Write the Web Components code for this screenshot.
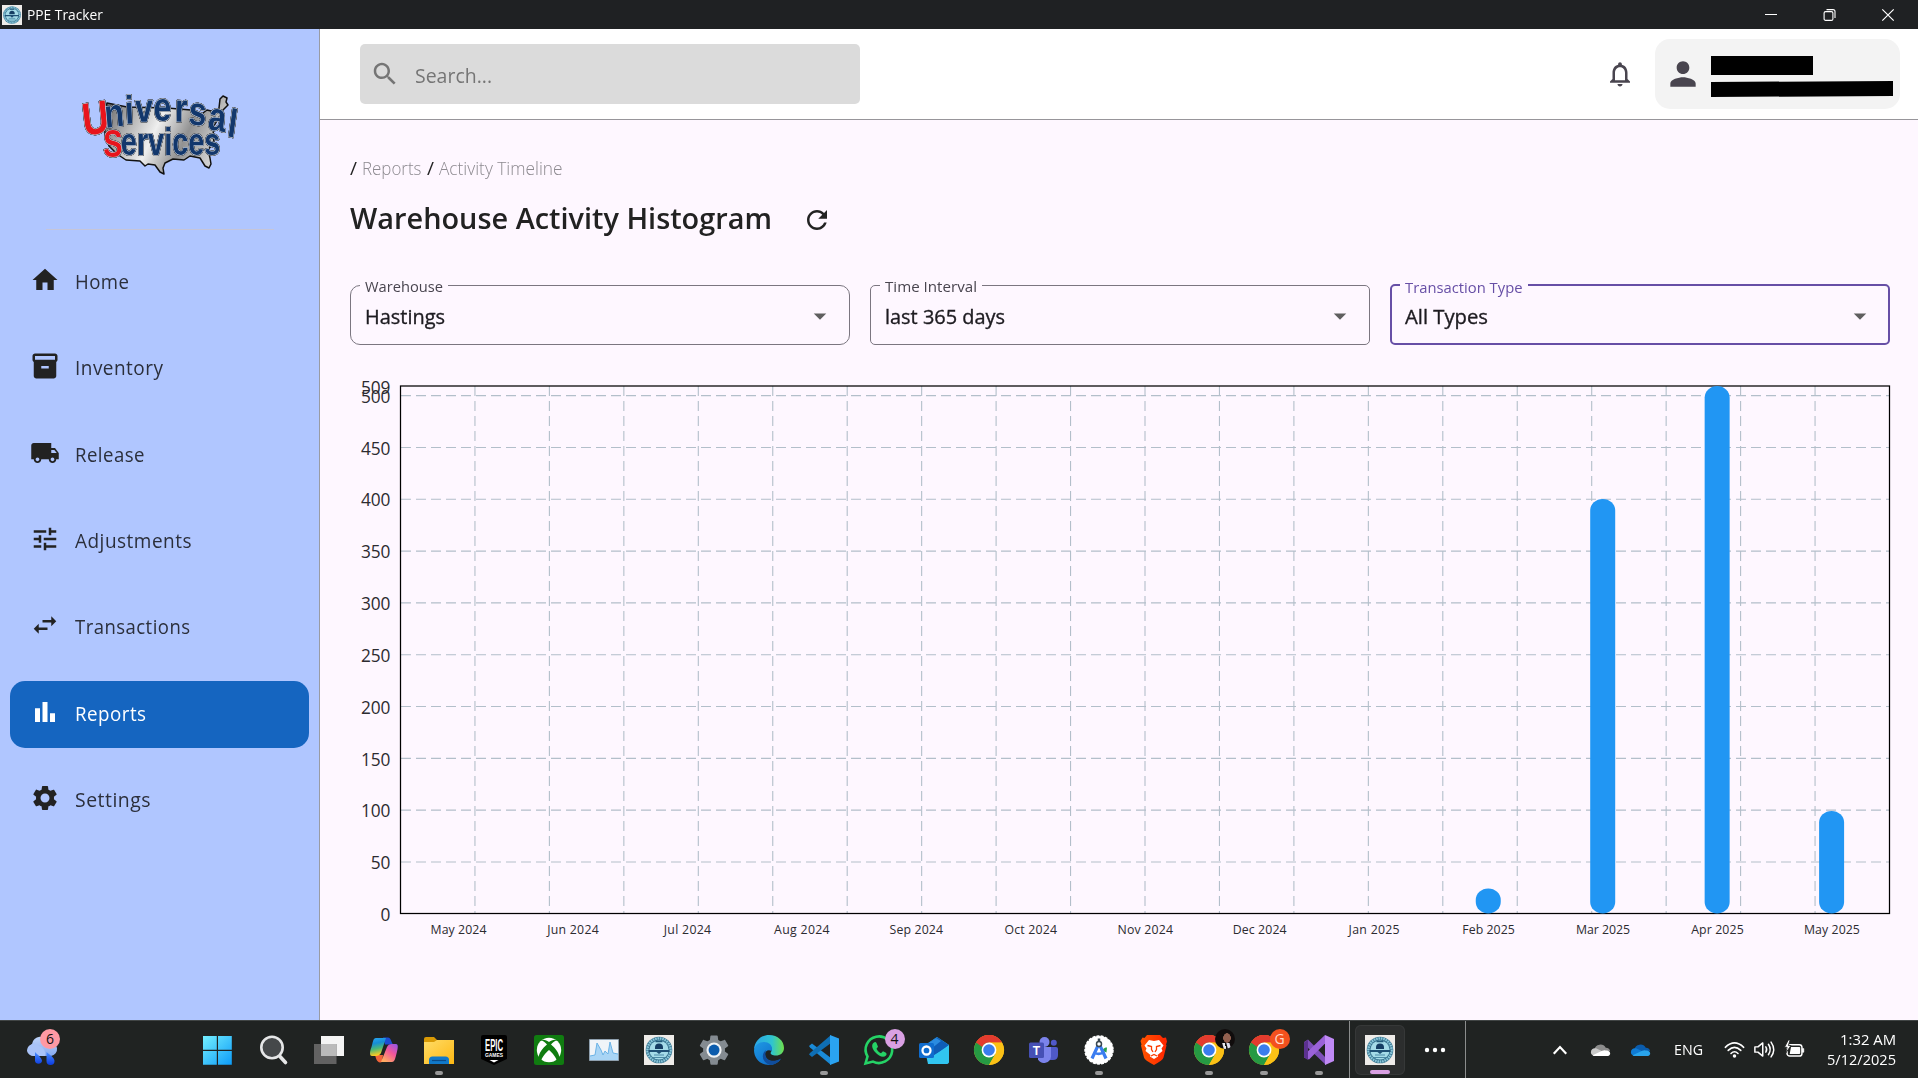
<!DOCTYPE html>
<html lang="en">
<head>
<meta charset="utf-8">
<title>PPE Tracker</title>
<style>
html,body{margin:0;height:100%;overflow:hidden}
body{font-family:"Open Sans","Noto Sans",sans-serif;color:#1d1b20}
</style>
</head>
<body>
<ppe-desktop></ppe-desktop>
<script>
const define=(name,html,setup)=>{
  const t=document.createElement('template');t.innerHTML=html;
  customElements.define(name,class extends HTMLElement{
    connectedCallback(){
      if(this.shadowRoot)return;
      const r=this.attachShadow({mode:'open'});
      r.appendChild(t.content.cloneNode(true));
      if(setup)setup(this,r);
    }
  });
};

/* Text that is condensed or widened to the advance given in "w". */
define('fit-text',`<style>:host{display:block;white-space:nowrap;flex:none}span{display:inline-block;transform-origin:0 50%}</style><span><slot></slot></span>`,(el,r)=>{
  const s=r.querySelector('span'),w=+el.getAttribute('w');
  const n=s.getBoundingClientRect().width;
  el.style.width=w+'px';
  if(n)s.style.transform=`scaleX(${w/n})`;
});

const chrome=`<circle cx="15" cy="15" r="15" fill="#fbc116"/><path d="M15 15 2 7.5A15 15 0 0 1 28 7.5H15z" fill="#e33b2e"/><path d="M2 7.5A15 15 0 0 0 15 30L21.5 18.7 15 15z" fill="#269a43"/><path d="M2 7.5 8.5 18.7 15 15V7.5z" fill="#269a43"/><path d="M2 7.5A15 15 0 0 1 28 7.5H15A7.5 7.5 0 0 0 8.3 12z" fill="#e33b2e"/><path d="M28 7.5H15l6.5 11.2L15 30A15 15 0 0 0 28 7.5" fill="#fbc116"/><circle cx="15" cy="15" r="7.4" fill="#fff"/><circle cx="15" cy="15" r="5.8" fill="#3b7ded"/>`;
const seal=`<path fill="#eeece9" d="M0 0h30v30H0z"/><circle cx="15" cy="15" r="13.3" fill="#3a7591"/><circle cx="15" cy="15" r="11.6" fill="none" stroke="#8cc9dc" stroke-width="2.400" stroke-dasharray="1.6 .8"/><circle cx="15" cy="15" r="9.6" fill="#a5dbe8"/><path d="M11.500 6.500h7" stroke="#245c7c" stroke-width="1.500"/><path d="M11 12.500a4 4 0 0 1 8 0v1.500h-8z" fill="#153d63"/><path d="M4.500 15h21v2h-8l-2.500 2-2.500-2h-8z" fill="#1f4f74"/><path d="M10 20h10M9 22.500h12" stroke="#4d8aa6" stroke-width="1.200"/>`;
const gear='M19.14 12.94c.04-.3.06-.61.06-.94 0-.32-.02-.64-.07-.94l2.03-1.58c.18-.14.23-.41.12-.61l-1.92-3.32c-.12-.22-.37-.29-.59-.22l-2.39.96c-.5-.38-1.03-.7-1.62-.94l-.36-2.54c-.04-.24-.24-.41-.48-.41h-3.84c-.24 0-.43.17-.47.41l-.36 2.54c-.59.24-1.13.57-1.62.94l-2.39-.96c-.22-.08-.47 0-.59.22L2.74 8.87c-.12.21-.08.47.12.61l2.03 1.58c-.05.3-.09.63-.09.94s.02.64.07.94l-2.03 1.58c-.18.14-.23.41-.12.61l1.92 3.32c.12.22.37.29.59.22l2.39-.96c.5.38 1.03.7 1.62.94l.36 2.54c.05.24.24.41.48.41h3.84c.24 0 .44-.17.47-.41l.36-2.54c.59-.24 1.13-.56 1.62-.94l2.39.96c.22.08.47 0 .59-.22l1.92-3.32c.12-.22.07-.47-.12-.61l-2.01-1.58zM12 15.600c-1.980 0-3.600-1.620-3.600-3.600s1.620-3.600 3.600-3.600 3.600 1.620 3.600 3.600-1.620 3.600-3.600 3.600z';
const m=d=>[24,`<path fill="currentColor" d="${d}"/>`];
const ICONS={
home:m('M10 20v-6h4v6h5v-8h3L12 3 2 12h3v8z'),
inventory:m('M20 2H4c-1 0-2 .9-2 2v3.010c0 .72.43 1.340 1 1.690V20c0 1.100 1.100 2 2 2h14c.9 0 2-.9 2-2V8.700c.57-.35 1-.97 1-1.690V4c0-1.100-1-2-2-2zm-5 12H9v-2h6v2zm5-7H4V4h16v3z'),
truck:m('M20 8h-3V4H3c-1.100 0-2 .9-2 2v11h2c0 1.660 1.340 3 3 3s3-1.340 3-3h6c0 1.660 1.340 3 3 3s3-1.340 3-3h2v-5l-3-4zM6 18.500c-.83 0-1.500-.67-1.500-1.500s.67-1.500 1.500-1.500 1.500.67 1.500 1.500-.67 1.500-1.500 1.500zm13.500-9l1.960 2.500H17V9.500h2.500zm-1.500 9c-.83 0-1.500-.67-1.500-1.500s.67-1.500 1.500-1.500 1.500.67 1.500 1.500-.67 1.500-1.500 1.500z'),
tune:m('M3 17v2h6v-2H3zM3 5v2h10V5H3zm10 16v-2h8v-2h-8v-2h-2v6h2zM7 9v2H3v2h4v2h2V9H7zm14 4v-2H11v2h10zm-6-4h2V7h4V5h-4V3h-2v6z'),
swap:m('M6.990 11L3 15l3.990 4v-3H14v-2H6.990v-3zM21 9l-3.990-4v3H10v2h7.010v3L21 9z'),
bars:m('M4 9h4v11H4zM16 13h4v7h-4zM10 4h4v16h-4z'),
settings:m(gear),
search:m('M15.500 14h-.79l-.28-.27C15.410 12.590 16 11.110 16 9.500 16 5.910 13.090 3 9.500 3S3 5.910 3 9.500 5.910 16 9.500 16c1.610 0 3.090-.59 4.230-1.570l.27.28v.79l5 4.990L20.490 19l-4.990-5zm-6 0C7.010 14 5 11.990 5 9.500S7.010 5 9.500 5 14 7.010 14 9.500 11.990 14 9.500 14z'),
bell:m('M12 22c1.100 0 2-.9 2-2h-4c0 1.100.9 2 2 2zm6-6v-5c0-3.070-1.630-5.640-4.500-6.320V4c0-.83-.67-1.500-1.500-1.500s-1.500.67-1.500 1.500v.68C7.640 5.360 6 7.920 6 11v5l-2 2v1h16v-1l-2-2zm-2 1H8v-6c0-2.480 1.510-4.500 4-4.500s4 2.020 4 4.500v6z'),
person:m('M12 12c2.210 0 4-1.790 4-4s-1.790-4-4-4-4 1.790-4 4 1.790 4 4 4zm0 2c-2.670 0-8 1.340-8 4v2h16v-2c0-2.660-5.330-4-8-4z'),
refresh:m('M17.650 6.350C16.200 4.900 14.210 4 12 4c-4.420 0-7.990 3.580-7.990 8s3.570 8 7.990 8c3.730 0 6.840-2.550 7.730-6h-2.080c-.82 2.330-3.040 4-5.650 4-3.310 0-6-2.690-6-6s2.690-6 6-6c1.660 0 3.140.69 4.220 1.780L13 11h7V4l-2.350 2.350z'),
drop:m('M7 10l5 5 5-5z'),
seal:[30,seal],
weather:[30,`<defs><linearGradient id="c" y2="1" x2="0"><stop stop-color="#bfd4fa"/><stop offset="1" stop-color="#86aaf0"/></linearGradient><linearGradient id="d" y2="1" x2="0"><stop stop-color="#4b8fff"/><stop offset="1" stop-color="#0b3be0"/></linearGradient></defs><path d="M7 21a6.500 6.500 0 0 1-2-12A9 9 0 0 1 22 7a7 7 0 0 1 2 14z" fill="url(#c)"/><path d="M0 16a7 7 0 0 1 12-5 8 8 0 0 1 6 10H7a6.500 6.500 0 0 1-7-5" fill="#a9c3f8"/><path d="M8 17c4 4 7 6 7 9a3.600 3.600 0 0 1-7 0zM19.500 17c5 4 8 6 8 9a4 4 0 0 1-8 0z" fill="url(#d)"/>`],
windows:[30,`<defs><linearGradient id="w" gradientUnits="userSpaceOnUse" x1="0" y1="0" x2="28" y2="30"><stop stop-color="#74efff"/><stop offset="1" stop-color="#0c9bf8"/></linearGradient></defs><path fill="url(#w)" d="M-1 1h13.800v13.800H-1zM14 1h13.800v13.800H14zM-1 16h13.800v13.800H-1zM14 16h13.800v13.800H14z"/>`],
find:[30,`<circle cx="13" cy="12.500" r="10.700" fill="#45484a" stroke="#e6e7e8" stroke-width="2.600"/><path d="m21 21.500 5.500 6" stroke="#e6e7e8" stroke-width="3.600" stroke-linecap="round"/>`],
task:[30,`<path d="M7 1h23v20H7z" fill="#f4f4f4"/><path d="M0 9h22.500v20H0z" fill="#626262"/><path d="M7 9h15.500v12H7z" fill="#bababa"/>`],
copilot:[30,`<defs><linearGradient id="p1" x2=".2" y2="1"><stop stop-color="#2ba9f3"/><stop offset=".35" stop-color="#168dd6"/><stop offset=".65" stop-color="#4bb876"/><stop offset="1" stop-color="#ffcb22"/></linearGradient><linearGradient id="p2" x1="1" x2=".3" y2="1"><stop stop-color="#8c55ee"/><stop offset=".5" stop-color="#f3569a"/><stop offset="1" stop-color="#ffab62"/></linearGradient></defs><path d="M14 2.500h5c3 0 3 4 5 7h-8z" fill="#1d4bd3"/><path d="M6 20h8l-1 7c-5 2-6-4-7-7" fill="#f2643a"/><path d="M7 3h10l-5 15c-1 2-3 3-5 3H3c-3 0-2-5-.5-9C4 7 4 3 7 3" fill="url(#p1)"/><path d="M23 27H12l6-15c1-2 2-3 5-3h4c2.500 0 2 4 .8 8.500C26.500 22 26 27 23 27" fill="url(#p2)"/>`],
folder:[30,`<defs><linearGradient id="f" x2="1" y2="1"><stop stop-color="#ffdc67"/><stop offset="1" stop-color="#fdb813"/></linearGradient></defs><path d="M0 4q0-2 2-2h8l4 4v4H0z" fill="#d99a05"/><path d="M0 7h10l3-2h17v24H0z" fill="url(#f)"/><path d="M5 29v-4q0-3.500 3.500-3.500h13q3.500 0 3.500 3.500v4z" fill="#1179c9"/><path d="M8 25.500h14" stroke="#0a4b89" stroke-width="1.200"/>`],
epic:[30,`<path d="M2 2q0-2 2-2h22q2 0 2 2v22L15 30 2 24z" fill="#000"/><text x="6" y="15.500" textLength="18" lengthAdjust="spacingAndGlyphs" font-family="Liberation Sans" font-weight="700" font-size="16" fill="#fff">EPIC</text><text x="6" y="22" textLength="18" lengthAdjust="spacingAndGlyphs" font-family="Liberation Sans" font-weight="700" font-size="5.500" fill="#fff">GAMES</text><path d="M10.500 25h9L15 27.500z" fill="#fff"/>`],
xbox:[30,`<rect width="30" height="30" rx="2.500" fill="#107c10"/><circle cx="15" cy="15" r="12.200" fill="#fff"/><path d="M6 5.500C9 3.500 13 5.500 15 7c2-1.500 6-3.500 9-1.500-2.500-.5-5 1.500-7 4 4.500 3.500 8.500 9 8.500 14L23 26c-1-4-5-8.500-8-11-3 2.500-7 7-8 11l-2.500-2.500c0-5 4-10.500 8.500-14-2-2.500-4.500-4.500-7-4" fill="#107c10"/>`],
monitor:[30,`<path d="M.5 4.500h29v21H.5z" fill="#f0f4f8" stroke="#8fa0ae"/><path d="M1 21l5-1 2-12 4 7 2 5 2-4 3 3 2-12 3 11 5 1v6H1z" fill="#a9d5f5"/><path d="M1 21l5-1 2-12 4 7 2 5 2-4 3 3 2-12 3 11 5 1" fill="none" stroke="#6bb3e6" stroke-width="1"/>`],
wset:[30,`<g transform="translate(-3.200 -3.200) scale(1.520)"><path d="${gear}" fill="#848b91"/><circle cx="12" cy="12" r="5" fill="#f0f2f4"/><circle cx="12" cy="12" r="3.600" fill="#0c5cad"/></g>`],
edge:[30,`<defs><linearGradient id="e1" x2="1"><stop stop-color="#2aa5e8"/><stop offset=".6" stop-color="#2fc4d0"/><stop offset="1" stop-color="#6fe04a"/></linearGradient><linearGradient id="e2" x2="1" y2="1"><stop stop-color="#1f9ae4"/><stop offset="1" stop-color="#0b62c4"/></linearGradient></defs><path d="M0 14C1 5 8 0 15 0c9 0 15 6 15 13 0 5-4 7.500-8 7.500-5 0-6-2-5-3.500 2-3 0-7-5-7-5 0-10 2-12 4" fill="url(#e1)"/><path d="M0 15c1-5 5-8 10-8 6 0 9.500 5 7.500 9-4-2-7 1-6.500 4 1 6 9 8 16 4-3 4-7.500 6-12 6C7 30 0 24 0 15" fill="url(#e2)"/><path d="M12 15c-3 9 5 14 15 8.500C24 28 19.500 30 16 30 9 28 6 20 12 15" fill="#104d9c"/>`],
vscode:[30,`<path d="M0 11l3-2.500L22 23v7L1 12.500z" fill="#1a8bd8"/><path d="M0 19.500 3 22 22 8V0L1 18z" fill="#0f6fb5"/><path d="M21 0l9 3.500v23L21 30z" fill="#2aa3f1"/>`],
whatsapp:[30,`<path d="M1.500 28.500l2-7A13.300 13.300 0 1 1 9 26.600z" fill="none" stroke="#25d366" stroke-width="2.600"/><path d="M10 7.500c-3 2-2 6 1 9.500 4 4.500 8.500 6 11 3.500 1-1 .5-2.500-.5-3l-2.500-1.200-2 2c-2-1-3.500-2.500-4.500-4.500l1.500-2L12.500 8q-1-1.500-2.500-.5" fill="#25d366"/>`],
outlook:[30,`<path d="M5 11 18 2l12 8v16q0 3-3 3H9z" fill="#36c9f3"/><path d="M5 11 18 2l12 8-18 13z" fill="#0f5cb7"/><path d="M5 11 17 3l5 3L8 17z" fill="#2a8be0"/><path d="M12 22 30 11v15q0 3-3 3H11z" fill="#31c5f0"/><rect y="8" width="15" height="15" rx="1.500" fill="#0f6cce"/><circle cx="7.500" cy="15.500" r="4" fill="none" stroke="#fff" stroke-width="2.300"/>`],
chrome:[30,chrome],
teams:[30,`<circle cx="15.500" cy="7" r="5" fill="#7b83eb"/><circle cx="24.800" cy="7.800" r="3" fill="#5059c9"/><path d="M19 12h8q2 0 2 2v6q0 5-5 5h-5z" fill="#4f59c8"/><path d="M9 12h13v9.500a7 7 0 0 1-13 3z" fill="#7b83eb"/><rect y="7.500" width="15" height="15.500" rx="1.500" fill="#4650b5"/><text x="7.500" y="19.500" text-anchor="middle" font-family="Liberation Sans" font-weight="700" font-size="12" fill="#fff">T</text>`],
studio:[30,`<circle cx="15" cy="15" r="14" fill="#fff" stroke="#fff" stroke-width="1.500" stroke-dasharray="3 1.200"/><path d="M18 15.500c2-3.500 5-3 5-3l-.5 5z" fill="#2aa24c"/><path d="M15 8.500 8 23.500M15 8.500l7 15" stroke="#3b7df0" stroke-width="3.200"/><path d="M10 17.500q5 3 10.500-.5" fill="none" stroke="#3b7df0" stroke-width="2.500"/><circle cx="15" cy="9" r="2.500" fill="#fff" stroke="#39474f" stroke-width="1.500"/><path d="M15 3.500v3" stroke="#39474f" stroke-width="2.500"/>`],
brave:[30,`<defs><linearGradient id="b" x2="1"><stop stop-color="#ff5500"/><stop offset="1" stop-color="#ff2400"/></linearGradient></defs><path d="M8 0h13l3 3 3-.5 1 4-1 3 .5 1-3 12Q24 25 15 30 5.500 25 5 22.500l-3-12 .5-1L1.500 6l2-3.500 2 .5z" fill="url(#b)"/><path d="M10 5l5 1 5-1 4.500 5.500-2 3 1 2.500-5 4 .5 1.500-4 2.500-4-2.500.5-1.500-5-4 1-2.500-2-3z" fill="#fff"/><path d="M8.500 10.500l4 1v3l1.500 2.500M21.500 10.500l-4 1v3L16 17M12 21l3-1.500 3 1.500" fill="none" stroke="#fb3c00" stroke-width="1.300"/>`],
vs:[30,`<path d="M0 7l4-2.500L22 23v7L2 11v10l-2-1.500z" fill="#7c4fb8"/><path d="M0 22.500V20L21 0v8.500L5 24.500z" fill="#9a62d8"/><path d="M0 7.500 4 5v20L0 22.500z" fill="#5c3191"/><path d="M21 0l9 4v22l-9 4z" fill="#c08af5"/>`],
more:[24,`<g fill="#fff"><circle cx="4" cy="12" r="2.200"/><circle cx="12" cy="12" r="2.200"/><circle cx="20" cy="12" r="2.200"/></g>`],
up:[24,`<path d="M4.500 16.500 12 8.500l7.500 8" fill="none" stroke="#fff" stroke-width="2.600"/>`],
cloudw:[24,`<path d="M5 12a7 7 0 0 1 13-2c3 0 5 2 5 4l-8 1z" fill="#8c8c8c"/><path d="M1 15c0-4 4-5.500 7-4l9 4.500L5 19c-2 0-4-1.500-4-4" fill="#c9c9c9"/><path d="M3 18.500l11-5q2-1 4-.5c4 0 5.500 2.500 5 4-.5 2-2 2.500-4 2.500H6q-2 0-3-1" fill="#fff"/>`],
cloudb:[24,`<path d="M5 12a7 7 0 0 1 13-2c3 0 5 2 5 4l-8 1z" fill="#0a5cad"/><path d="M1 15c0-4 4-5.500 7-4l9 4.500L5 19c-2 0-4-1.500-4-4" fill="#0f7bd4"/><path d="M3 18.500l11-5q2-1 4-.5c4 0 5.500 2.500 5 4-.5 2-2 2.500-4 2.500H6q-2 0-3-1" fill="#29a4ec"/>`],
wifi:[24,`<g fill="none" stroke="#fff" stroke-width="1.800" stroke-linecap="round"><path d="M1.500 9.500q10.500-10 21 0M4.800 13q7.200-7 14.400 0M8 16.500q4-4 8 0"/></g><circle cx="12" cy="19.300" r="2" fill="#fff"/>`],
sound:[24,`<g fill="none" stroke="#fff" stroke-width="1.700" stroke-linecap="round" stroke-linejoin="round"><path d="M1 9h3.500L10 4.500v15L4.500 15H1zM13.500 9q2 3 0 6M16.500 6q4 6 0 12M19.500 3.500q6 8.500 0 17"/></g>`],
battery:[24,`<rect x="3.500" y="6.500" width="17" height="13" rx="3" fill="none" stroke="#fff" stroke-width="1.700"/><path d="M8 9h9.500q1 0 1 1v6q0 1-1 1H6.500z" fill="#fff"/><path d="M21 11h1.500v4H21z" stroke="#fff" fill="#fff"/><path d="M5 1 .5 9.500h3L2 16l6-8.500H5L7 1z" fill="#fff" stroke="#202322" stroke-width="1"/>`],
min:[12,`<path d="M0 5.500h12" stroke="#fff"/>`],
max:[12,`<rect x=".1" y="2.600" width="8.800" height="8.800" rx="1.500" fill="none" stroke="#fff" stroke-width="1.100"/><path d="M2.500 .6H9q2 0 2 2V9" fill="none" stroke="#fff" stroke-width="1.100"/>`],
close:[12,`<path d="M.3.300l11.400 11.400M11.700.300.300 11.700" stroke="#fff" stroke-width="1.200"/>`]
};
define('app-icon',`<style>:host{display:block;flex:none}svg{display:block;overflow:visible}</style><svg></svg>`,(el,r)=>{
  const [v,p]=ICONS[el.getAttribute('name')],s=r.querySelector('svg'),z=el.getAttribute('size')||30;
  s.setAttribute('viewBox',`0 0 ${v} ${v}`);s.setAttribute('width',z);s.setAttribute('height',z);s.innerHTML=p;
});

define('title-bar',`<style>
:host{display:flex;height:29px;background:#1f2123;color:#fff;align-items:center;padding-left:2px;font-size:14.500px;line-height:20px}
fit-text{margin-left:5px;flex:1 0 auto}.c{display:flex;gap:46.500px;margin-left:auto;padding-right:24px}
</style><app-icon name="seal" size="20"></app-icon><fit-text w="76">PPE Tracker</fit-text>
<div class="c"><app-icon name="min" size="12"></app-icon><app-icon name="max" size="12"></app-icon><app-icon name="close" size="12"></app-icon></div>`);

define('brand-logo',`<style>:host{display:block}svg{display:block;overflow:visible}
text{font-family:"Liberation Sans",Arial,sans-serif;font-weight:700;fill:#12376c;stroke:#c3cbd8;stroke-width:1.500px;paint-order:stroke;stroke-linejoin:round}
.r{fill:#e8141c}.t{filter:drop-shadow(0 0 .6px #000) drop-shadow(0 0 .4px #000)}</style>
<svg width="154" height="82" viewBox="83 93 154 82"><defs><linearGradient id="g" x1="0" x2="1" y2=".3"><stop stop-color="#5c5c5c"/><stop offset=".25" stop-color="#a9a9a9"/><stop offset=".5" stop-color="#efefef"/><stop offset=".75" stop-color="#929292"/><stop offset="1" stop-color="#d0d0d0"/></linearGradient></defs>
<path d="M107 103l20 4 40 1 24 2 8 6 8-6 8 2 4-4 1-9 3-3 4 2-1 4 2 3-5 5-5 9-4 7-1 9 1 7-6 8 2 8 1 6-2 4-4-2-5-8-10-2-6 4-11-1-8 4-2 5 1 6-4-2-5-7-7-1-3 2-5-5-14-1-9-6-8-8-4-12-1-16z" fill="url(#g)" stroke="#111" stroke-width="1.500" stroke-linejoin="round"/>
<g class="t"><g transform="scale(.8 1)"><text font-size="40" x="105 132 157 169 192 218 235 259 283" y="136 128 124 122 121 121.500 124 129 136" rotate="-8 -6 -3 -1 0 2 5 8 10"><tspan class="r" font-size="46">U</tspan>niversal</text></g>
<g transform="scale(.76 1)"><text font-size="38" x="136 159" y="157 155.500"><tspan class="r">S</tspan>ervices</text></g></g></svg>`);

customElements.define('nav-entry',class extends HTMLElement{connectedCallback(){
  const r=this.attachShadow({mode:'open'});
  r.innerHTML=`<style>
:host{display:flex;box-sizing:border-box;height:66.300px;margin:0 10px 20px;padding:0 0 2px 20px;align-items:center;border-radius:15px;font-size:19.500px;line-height:26px;color:#2b2f3b;letter-spacing:.5px}
:host([active]){background:#1565c0;color:#fff}
app-icon{color:#222;margin:-4px 15px 0 0}:host([active]) app-icon{color:#fff}
</style><app-icon name="${this.getAttribute('icon')}" size="30"></app-icon><fit-text w="${this.getAttribute('w')}"><slot></slot></fit-text>`;
}});
customElements.define('side-bar',class extends HTMLElement{connectedCallback(){
  const r=this.attachShadow({mode:'open'});
  r.innerHTML=`<style>
:host{display:flex;flex-direction:column;box-sizing:border-box;width:320px;background:#b0c6ff;border-right:1px solid #999ba3}
brand-logo{margin:64px 0 0 83px}hr{border:0;height:1px;background:#c6c5d8;width:228px;margin:54px 0 20px 46px}
</style><brand-logo></brand-logo><hr>`+[['home','Home',54.5],['inventory','Inventory',88.5],['truck','Release',70],['tune','Adjustments',117],['swap','Transactions',115.5],['bars','Reports',71.5,1],['settings','Settings',76]].map(([i,t,w,a])=>`<nav-entry icon="${i}" w="${w}" ${a?'active':''}>${t}</nav-entry>`).join('');
}});

define('top-bar',`<style>
:host{display:flex;box-sizing:border-box;height:91px;background:#fff;border-bottom:1px solid #97959a;padding:0 18px 0 40px;align-items:center}
.s{display:flex;box-sizing:border-box;align-items:center;width:500px;height:60px;border-radius:5px;background:#dbdbdb;padding-left:9.500px;color:#757575;font-size:19.500px;line-height:26px}
.s fit-text{margin-left:15px;margin-top:3px}
.b{margin-left:auto;margin-right:20px;color:#49454f}
.u{display:flex;box-sizing:border-box;width:245px;height:70px;border-radius:15px;background:#f3f3f3;align-items:center;padding-left:9px;color:#49454f}
.k{margin-left:8.500px;display:block;overflow:visible}
</style><div class="s"><app-icon name="search" size="30"></app-icon><fit-text w="77">Search...</fit-text></div>
<app-icon class="b" name="bell" size="30"></app-icon>
<div class="u"><app-icon name="person" size="38"></app-icon><svg class="k" width="183" height="36"><path d="M0 0h102v19H0zM0 26l182-1v15L0 41z"/></svg></div>`);

customElements.define('filter-select',class extends HTMLElement{connectedCallback(){
  const r=this.attachShadow({mode:'open'}),g=n=>this.getAttribute(n);
  r.innerHTML=`<style>
:host{display:block;--c:#7b7680;--r:5px;--b:1px;color:#49454f}
:host([round]){--r:10px}:host([focused]){--c:#674fa6;--b:2px}
fieldset{box-sizing:border-box;height:70px;margin:0;min-width:0;border:var(--b) solid var(--c);border-radius:var(--r);padding:0 calc(15px - var(--b)) 0 calc(15px - var(--b))}
legend{margin-left:-5px;padding:0 5px;height:20px;font-size:14.500px;line-height:23px}
:host([focused]) legend{color:#674fa6;line-height:25px}
.v{display:flex;justify-content:space-between;align-items:center;height:44px;font-size:19.500px;line-height:26px;color:#1d1b20}
.v fit-text{-webkit-text-stroke:.35px #1d1b20}
app-icon{color:#5f5f5f;margin-top:-3px}
</style><fieldset><legend><fit-text w="${g('lw')}">${g('label')}</fit-text></legend><div class="v"><fit-text w="${g('vw')}"><slot></slot></fit-text><app-icon name="drop" size="30"></app-icon></div></fieldset>`;
}});

customElements.define('activity-chart',class extends HTMLElement{connectedCallback(){
  const r=this.attachShadow({mode:'open'}),L=400.5,R=1889.5,T=386,B=913.5,k=(B-T)/509;
  let g='',x,i;
  for(i=1;i<20;i++){x=L+i*(R-L)/20;g+=`<path d="M${x} ${T}V${B}"/>`}
  for(i=1;i<=10;i++)g+=`<path d="M${L+.5} ${B-i*50*k+.3}H${R}"/>`;
  let t='';
  for(i of [0,50,100,150,200,250,300,350,400,450,500,509]){const w=(''+i).length*9.800;t+=`<text font-size="17.300" x="${390.300-w}" y="${B-i*k+7.500}" textLength="${w}">${i}</text>`}
  const M=[['May 2024',56],['Jun 2024',51.5],['Jul 2024',47.5],['Aug 2024',55.5],['Sep 2024',53.5],['Oct 2024',52.5],['Nov 2024',55.5],['Dec 2024',54],['Jan 2025',51],['Feb 2025',52.5],['Mar 2025',54],['Apr 2025',52.5],['May 2025',56]];
  const V=[0,0,0,0,0,0,0,0,0,24.2,400,509,99];let bars='';
  M.forEach(([s,w],n)=>{const c=458.2+n*114.45;t+=`<text font-size="12.300" x="${c-w/2+.3}" y="934" textLength="${w}">${s}</text>`;
    if(V[n])bars+=`<rect x="${c-12.5}" y="${B-V[n]*k}" width="25" height="${V[n]*k}" rx="12.500" ry="${Math.min(11.6,V[n]*k/2)}"/>`});
  r.innerHTML=`<style>:host{display:block}svg{display:block;overflow:visible}text{fill:#2c2b30}</style>
<svg width="1540" height="585" viewBox="350 365 1540 585"><g stroke="#b3bfca" stroke-width="1.100" stroke-dasharray="10 5" fill="none">${g}</g><rect x="${L}" y="${T}" width="${R-L}" height="${B-T}" fill="none" stroke="#000" stroke-width="1.250"/><g fill="#2196f3">${bars}</g>${t}</svg>`;
}});

define('reports-page',`<style>
:host{display:block;background:#fef7ff;padding:36px 28px 0 30px;flex:1}
.c{display:flex;height:24px;line-height:25px;font-size:17.500px;font-weight:300;color:#8d8a90;align-items:center}
.d{color:#222;font-weight:400}
.t{display:flex;align-items:center;height:40px;margin-top:20px;font-size:29.500px;line-height:40px;font-weight:600;color:#222}
.t fit-text{margin-top:-4px;margin-right:30px}
.f{display:grid;grid-template-columns:repeat(3,500px);gap:20px;margin-top:35px}
activity-chart{margin-top:20px}
</style><div class="c"><fit-text class="d" w="7">/</fit-text><fit-text w="59.500" style="margin:0 5px">Reports</fit-text><fit-text class="d" w="7">/</fit-text><fit-text w="123.500" style="margin-left:5px">Activity Timeline</fit-text></div>
<div class="t"><fit-text w="422">Warehouse Activity Histogram</fit-text><app-icon name="refresh" size="30"></app-icon></div>
<div class="f"><filter-select round label="Warehouse" lw="78" vw="80">Hastings</filter-select><filter-select label="Time Interval" lw="92" vw="120">last 365 days</filter-select><filter-select focused label="Transaction Type" lw="117.5" vw="83">All Types</filter-select></div>
<activity-chart></activity-chart>`);

customElements.define('task-button',class extends HTMLElement{connectedCallback(){
  const r=this.attachShadow({mode:'open'});
  r.innerHTML=`<style>:host{position:relative;display:flex;width:55px;height:58px;align-items:center;justify-content:center;box-sizing:border-box}
:host([open])::after{content:"";position:absolute;bottom:4px;left:23.500px;width:8px;height:4px;border-radius:2px;background:#999}
:host([current]){background:#2c2e2e;border-radius:6px;width:50px;height:50px;padding:0;box-shadow:inset 0 0 0 1px #363838}
:host([current])::after{content:"";position:absolute;bottom:1px;left:15px;width:20px;height:4px;border-radius:2px;background:#d9a0e3}
::slotted(*){position:absolute;left:33.500px;top:8px;width:20px;height:20px;border-radius:50%;text-align:center;font-size:14px;line-height:20px;color:#111}</style><app-icon name="${this.getAttribute('icon')}"></app-icon><slot></slot>`;
}});
define('task-bar',`<style>
:host{display:flex;box-sizing:border-box;height:58px;background:#202322;color:#fff;border-top:1px solid #414545;align-items:center}
.w{margin-left:14px;width:55px}.a{display:flex;margin-left:122px}
i{width:1px;height:57px;background:#8b8d8d;flex:none}
.tray{display:flex;align-items:center;margin-left:84px}
.clock{margin-left:auto;margin-right:22px;font-size:14.500px;line-height:20px;display:flex;flex-direction:column;align-items:flex-end;padding-top:1px}
</style>
<task-button class="w" icon="weather"><span style="background:#ff99a4;left:26px">6</span></task-button>
<div class="a"><task-button icon="windows"></task-button><task-button icon="find"></task-button><task-button icon="task"></task-button><task-button icon="copilot"></task-button><task-button icon="folder" open></task-button><task-button icon="epic"></task-button><task-button icon="xbox"></task-button><task-button icon="monitor"></task-button><task-button icon="seal"></task-button><task-button icon="wset"></task-button><task-button icon="edge"></task-button><task-button icon="vscode" open></task-button><task-button icon="whatsapp"><span style="background:#d9a0e3">4</span></task-button><task-button icon="outlook"></task-button><task-button icon="chrome"></task-button><task-button icon="teams"></task-button><task-button icon="studio" open></task-button><task-button icon="brave"></task-button><task-button icon="chrome" open><span style="background:radial-gradient(ellipse 4px 5px at 12px 9px,#93604f 90%,transparent),linear-gradient(75deg,transparent 8px,#e8e8ee 9px 11px,#111 11px 12px,#dde 13px 15px,transparent 16px) 0 14px/20px 6px no-repeat,#100c0c"></span></task-button><task-button icon="chrome" open><span style="background:#f4511e;color:#ffd9cc">G</span></task-button><task-button icon="vs" open></task-button></div>
<i style="margin:0 5px 0 3px"></i><task-button icon="seal" current></task-button><app-icon name="more" size="24" style="margin-left:18px"></app-icon><i style="margin-left:18px"></i>
<div class="tray"><app-icon name="up" size="20"></app-icon><app-icon name="cloudw" size="21" style="margin-left:19.500px"></app-icon><app-icon name="cloudb" size="21" style="margin-left:19px"></app-icon><fit-text w="29" style="margin-left:23px;font-size:14.500px">ENG</fit-text><app-icon name="wifi" size="21" style="margin-left:21.500px"></app-icon><app-icon name="sound" size="21" style="margin-left:9px"></app-icon><app-icon name="battery" size="21" style="margin-left:9px"></app-icon></div>
<div class="clock"><fit-text w="56">1:32 AM</fit-text><fit-text w="69">5/12/2025</fit-text></div>`);

define('ppe-desktop',`<style>
:host{display:flex;flex-direction:column;width:1918px;height:1078px;overflow:hidden}
.m{display:flex;height:991px}.p{display:flex;flex-direction:column;flex:1}
</style><title-bar></title-bar><div class="m"><side-bar></side-bar><div class="p"><top-bar></top-bar><reports-page></reports-page></div></div><task-bar></task-bar>`);
</script>
</body>
</html>
